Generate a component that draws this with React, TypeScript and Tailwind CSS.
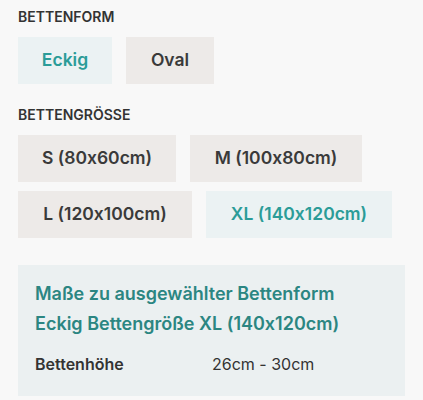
const SHAPES = [
  { label: "Eckig", w: "w-[94px]", active: true },
  { label: "Oval", w: "w-[88px]" },
];
const SIZES = [
  { label: "S (80x60cm)", w: "w-[158px]" },
  { label: "M (100x80cm)", w: "w-[172px]" },
  { label: "L (120x100cm)", w: "w-[174px]" },
  { label: "XL (140x120cm)", w: "w-[186px]", active: true },
];

function Option({ label, w, active }: { label: string; w: string; active?: boolean }) {
  return (
    <button
      className={`h-[47px] ${w} text-[17.5px] font-semibold ${
        active ? "bg-[#ebf2f3] text-[#2b9c98]" : "bg-[#edeae8] text-[#3a3a3a]"
      }`}
    >
      {label}
    </button>
  );
}

export default function App() {
  return (
    <div
      className="min-h-[400px] bg-[#f8f8f8] px-[18px] pt-[6px] [font-feature-settings:'calt'_0]"
      style={{ fontFamily: "Inter, 'Noto Sans', sans-serif" }}
    >
      <div className="text-[14px] font-semibold text-[#333]">BETTENFORM</div>
      <div className="mt-[10px] flex gap-[14px]">
        {SHAPES.map((s) => (
          <Option key={s.label} {...s} />
        ))}
      </div>

      <div className="mt-[20px] text-[14px] font-semibold text-[#333]">BETTENGRÖSSE</div>
      <div className="mt-[10px] flex flex-wrap gap-x-[14px] gap-y-[9px]">
        {SIZES.map((s) => (
          <Option key={s.label} {...s} />
        ))}
      </div>

      <div className="mt-[27px] w-[387px] bg-[#ebf0f1] px-[17px] pt-[14px] pb-[20px]">
        <div className="text-[18px] font-semibold leading-[30px] text-[#2b8682]">
          Maße zu ausgewählter Bettenform
          <br />
          Eckig Bettengröße XL (140x120cm)
        </div>
        <div className="mt-[13px] flex text-[16px] text-[#333]">
          <span className="w-[177px] font-semibold">Bettenhöhe</span>
          <span>26cm - 30cm</span>
        </div>
      </div>
    </div>
  );
}
